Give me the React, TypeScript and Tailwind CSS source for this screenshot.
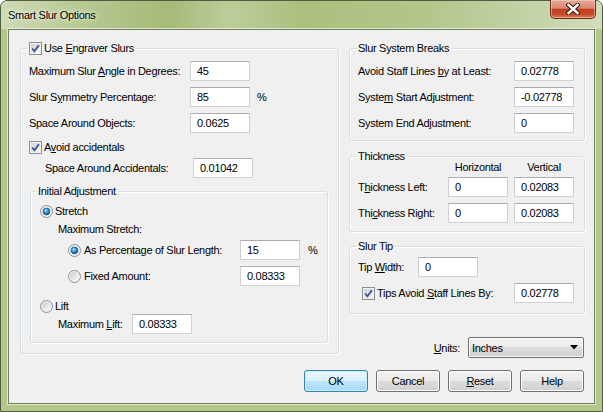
import { useId } from "react";

function Check() {
  const id = useId();
  return (
    <svg width="13" height="13" viewBox="0 0 13 13" className="shrink-0">
      <defs>
        <linearGradient id={id} x1="0" y1="0" x2="1" y2="1">
          <stop offset="0" stopColor="#cdd2d8" />
          <stop offset="1" stopColor="#f7f7f7" />
        </linearGradient>
      </defs>
      <rect x="0.5" y="0.5" width="12" height="12" fill="#f4f4f4" stroke="#8e8f8f" />
      <rect x="2" y="2" width="9" height="9" fill={`url(#${id})`} />
      <path d="M3.2 6.4 L5.4 9.2 L9.9 3.2" fill="none" stroke="#c8d1e4" strokeWidth="3" />
      <path d="M3.2 6.4 L5.4 9.2 L9.9 3.2" fill="none" stroke="#3c4f82" strokeWidth="1.6" />
    </svg>
  );
}

function Radio({ on = false }: { on?: boolean }) {
  const id = useId();
  return (
    <svg width="13" height="13" viewBox="0 0 13 13" className="shrink-0">
      <defs>
        <linearGradient id={id + "b"} x1="0" y1="0" x2="1" y2="1">
          <stop offset="0" stopColor="#c9ced4" />
          <stop offset="1" stopColor="#fbfbfb" />
        </linearGradient>
        <radialGradient id={id + "d"} cx="0.4" cy="0.35" r="0.7">
          <stop offset="0" stopColor="#b8ecff" />
          <stop offset="0.45" stopColor="#2f93d4" />
          <stop offset="1" stopColor="#0b4a80" />
        </radialGradient>
      </defs>
      <circle cx="6.5" cy="6.5" r="6" fill="#f2f2f2" stroke="#8e8f8f" />
      <circle cx="6.5" cy="6.5" r="4.6" fill={`url(#${id}b)`} />
      {on && <circle cx="6.5" cy="6.5" r="3.4" fill={`url(#${id}d)`} stroke="#1c4e78" strokeWidth="0.6" />}
    </svg>
  );
}

function Box({ value }: { value: string }) {
  return (
    <div className="h-[20px] w-[60px] shrink-0 flex items-center bg-white border border-[#cdd1d6] border-t-[#abadb3] pl-[6px]">
      {value}
    </div>
  );
}

function Btn({ children, focus = false }: { children: React.ReactNode; focus?: boolean }) {
  return (
    <div
      className={
        focus
          ? "w-[64px] h-[22px] flex items-center justify-center rounded-[3px] border border-[#3c7fb1] bg-[linear-gradient(#eaf6fd_0%,#d9f0fc_50%,#bee6fd_50%,#a7d9f5_100%)] shadow-[inset_0_0_0_1px_#c4f0ff]"
          : "w-[64px] h-[22px] flex items-center justify-center rounded-[3px] border border-[#707070] bg-[linear-gradient(#f2f2f2_0%,#ebebeb_50%,#dddddd_50%,#cfcfcf_100%)] shadow-[inset_0_0_0_1px_#fcfcfc]"
      }
    >
      {children}
    </div>
  );
}

export default function App() {
  return (
    <div className="w-[603px] h-[412px] flex flex-col border border-[#4f5e41] rounded-t-[7px] bg-[#b4c78a] font-['Liberation_Sans',Arial,sans-serif] text-[11px] tracking-[-0.3px] text-black leading-[14px]">
      {/* title bar */}
      <div className="h-[28px] shrink-0 flex justify-between pl-[7px] pr-[6px] rounded-t-[6px] bg-[linear-gradient(90deg,#cfdab7_0%,#b9ca95_12%,#a6ba79_28%,#bccd9a_38%,#abc07f_50%,#b2c68a_70%,#c6d4aa_90%,#d2dcbb_100%)]">
        <div className="self-center text-[11px] [text-shadow:0_0_6px_#f4f7ee,0_0_3px_#f4f7ee]">Smart Slur Options</div>
        <div className="-mt-[1px] w-[46px] h-[19px] flex items-center justify-center rounded-b-[5px] border border-t-0 border-[#6b2b1e] bg-[linear-gradient(#e8ab9a_0%,#d98873_45%,#c4401f_52%,#c84a2c_80%,#e07c5c_100%)] shadow-[inset_0_0_0_1px_rgba(255,220,210,0.5)]">
          <svg width="14" height="12" viewBox="0 0 14 12">
            <path d="M2.5 2 L11.5 10 M11.5 2 L2.5 10" stroke="#3b1710" strokeWidth="4.4" strokeLinecap="square" />
            <path d="M2.5 2 L11.5 10 M11.5 2 L2.5 10" stroke="#ffffff" strokeWidth="2.4" strokeLinecap="square" />
          </svg>
        </div>
      </div>

      {/* client */}
      <div className="flex-1 mx-[7px] mb-[7px] border border-[#6f7f5d] bg-[#f0f0f0] flex flex-col pt-[11px] pl-[11px] pr-[9px] shadow-[0_0_0_1px_rgba(235,242,222,0.8)]">
        <div className="flex items-start gap-[10px]">
          {/* left column */}
          <fieldset className="w-[319px] shrink-0 border border-[#d5dfe5] rounded-[3px] pb-[10px] shadow-[inset_1px_1px_0_#fff,1px_1px_0_#fff]">
            <legend className="ml-[7px] px-[1px]">
              <span className="h-[14px] flex items-center gap-[2px]">
                <Check />
                <span>
                  Use <u>E</u>ngraver Slurs
                </span>
              </span>
            </legend>
            <div className="pl-[8px] mt-[3px]">
              <div className="h-[26px] flex items-center">
                <span className="w-[161px]">
                  Maximum Slur <u>A</u>ngle in Degrees:
                </span>
                <Box value="45" />
              </div>
              <div className="h-[26px] flex items-center">
                <span className="w-[161px]">
                  Slur S<u>y</u>mmetry Percentage:
                </span>
                <Box value="85" />
                <span className="ml-[7px]">%</span>
              </div>
              <div className="h-[26px] flex items-center">
                <span className="w-[161px]">Space Around Objects:</span>
                <Box value="0.0625" />
              </div>
              <div className="h-[22px] flex items-center gap-[2px]">
                <Check />
                <span>
                  A<u>v</u>oid accidentals
                </span>
              </div>
              <div className="h-[20px] flex items-center pl-[16px]">
                <span className="w-[148px]">Space Around Accidentals:</span>
                <Box value="0.01042" />
              </div>

              <fieldset className="mt-[6px] ml-[1px] w-[298px] border border-[#d5dfe5] rounded-[3px] pb-[8px] shadow-[inset_1px_1px_0_#fff,1px_1px_0_#fff]">
                <legend className="ml-[5px] px-[2px] h-[14px]">Initial Adjustment</legend>
                <div className="pl-[9px] mt-[3px]">
                  <div className="h-[20px] flex items-center gap-[2px]">
                    <Radio on />
                    <span>Stretch</span>
                  </div>
                  <div className="h-[16px] flex items-center pl-[18px]">Maximum Stretch:</div>
                  <div className="h-[26px] flex items-center pl-[28px]">
                    <Radio on />
                    <span className="ml-[3px] w-[156px]">As Percentage of Slur Length:</span>
                    <Box value="15" />
                    <span className="ml-[8px]">%</span>
                  </div>
                  <div className="h-[26px] flex items-center pl-[28px]">
                    <Radio />
                    <span className="ml-[3px] w-[156px]">Fixed Amount:</span>
                    <Box value="0.08333" />
                  </div>
                  <div className="mt-[9px] h-[16px] flex items-center gap-[2px]">
                    <Radio />
                    <span>Lift</span>
                  </div>
                  <div className="h-[20px] flex items-center pl-[18px]">
                    <span className="w-[74px]">
                      Maximum <u>L</u>ift:
                    </span>
                    <Box value="0.08333" />
                  </div>
                </div>
              </fieldset>
            </div>
          </fieldset>

          {/* right column */}
          <div className="w-[236px] shrink-0 flex flex-col">
            <fieldset className="border border-[#d5dfe5] rounded-[3px] pb-[4px] shadow-[inset_1px_1px_0_#fff,1px_1px_0_#fff]">
              <legend className="ml-[6px] px-[2px] h-[14px]">Slur System Breaks</legend>
              <div className="pl-[8px] mt-[3px]">
                <div className="h-[26px] flex items-center">
                  <span className="w-[156px]">
                    Avoid Staff Lines <u>b</u>y at Least:
                  </span>
                  <Box value="0.02778" />
                </div>
                <div className="h-[26px] flex items-center">
                  <span className="w-[156px]">
                    Syste<u>m</u> Start Adjustment:
                  </span>
                  <Box value="-0.02778" />
                </div>
                <div className="h-[26px] flex items-center">
                  <span className="w-[156px]">System End Adjustment:</span>
                  <Box value="0" />
                </div>
              </div>
            </fieldset>

            <fieldset className="mt-[8px] border border-[#d5dfe5] rounded-[3px] pb-[5px] shadow-[inset_1px_1px_0_#fff,1px_1px_0_#fff]">
              <legend className="ml-[6px] px-[2px] h-[14px]">Thickness</legend>
              <div className="pl-[8px] -mt-[3px]">
                <div className="h-[14px] flex items-center pl-[90px] gap-[6px]">
                  <span className="w-[60px] text-center">Horizontal</span>
                  <span className="w-[60px] text-center">Vertical</span>
                </div>
                <div className="h-[26px] flex items-center gap-[6px]">
                  <span className="w-[84px]">
                    T<u>h</u>ickness Left:
                  </span>
                  <Box value="0" />
                  <Box value="0.02083" />
                </div>
                <div className="h-[26px] flex items-center gap-[6px]">
                  <span className="w-[84px]">
                    Thi<u>c</u>kness Right:
                  </span>
                  <Box value="0" />
                  <Box value="0.02083" />
                </div>
              </div>
            </fieldset>

            <fieldset className="mt-[7px] border border-[#d5dfe5] rounded-[3px] pb-[7px] shadow-[inset_1px_1px_0_#fff,1px_1px_0_#fff]">
              <legend className="ml-[6px] px-[2px] h-[14px]">Slur Tip</legend>
              <div className="pl-[8px] mt-[1px]">
                <div className="h-[26px] flex items-center">
                  <span className="w-[60px]">
                    Tip <u>W</u>idth:
                  </span>
                  <Box value="0" />
                </div>
                <div className="h-[26px] flex items-center pl-[4px]">
                  <Check />
                  <span className="ml-[2px] w-[137px]">
                    Tips Avoid <u>S</u>taff Lines By:
                  </span>
                  <Box value="0.02778" />
                </div>
              </div>
            </fieldset>

            <div className="mt-[23px] h-[21px] flex items-center justify-end mr-[1px]">
              <span>
                <u>U</u>nits:
              </span>
              <div className="ml-[8px] w-[116px] h-[21px] flex items-center justify-between pl-[3px] pr-[5px] rounded-[2px] border border-[#707070] bg-[linear-gradient(#f2f2f2_0%,#ebebeb_50%,#dddddd_50%,#cfcfcf_100%)] shadow-[inset_0_0_0_1px_#fafafa]">
                <span>Inches</span>
                <svg width="8" height="5" viewBox="0 0 8 5">
                  <path d="M0 0 L8 0 L4 4.5 Z" fill="#000" />
                </svg>
              </div>
            </div>
          </div>
        </div>

        {/* buttons */}
        <div className="mt-[12px] flex justify-end gap-[8px] pr-[1px]">
          <Btn focus>OK</Btn>
          <Btn>Cancel</Btn>
          <Btn>
            <span>
              <u>R</u>eset
            </span>
          </Btn>
          <Btn>Help</Btn>
        </div>
      </div>
    </div>
  );
}
